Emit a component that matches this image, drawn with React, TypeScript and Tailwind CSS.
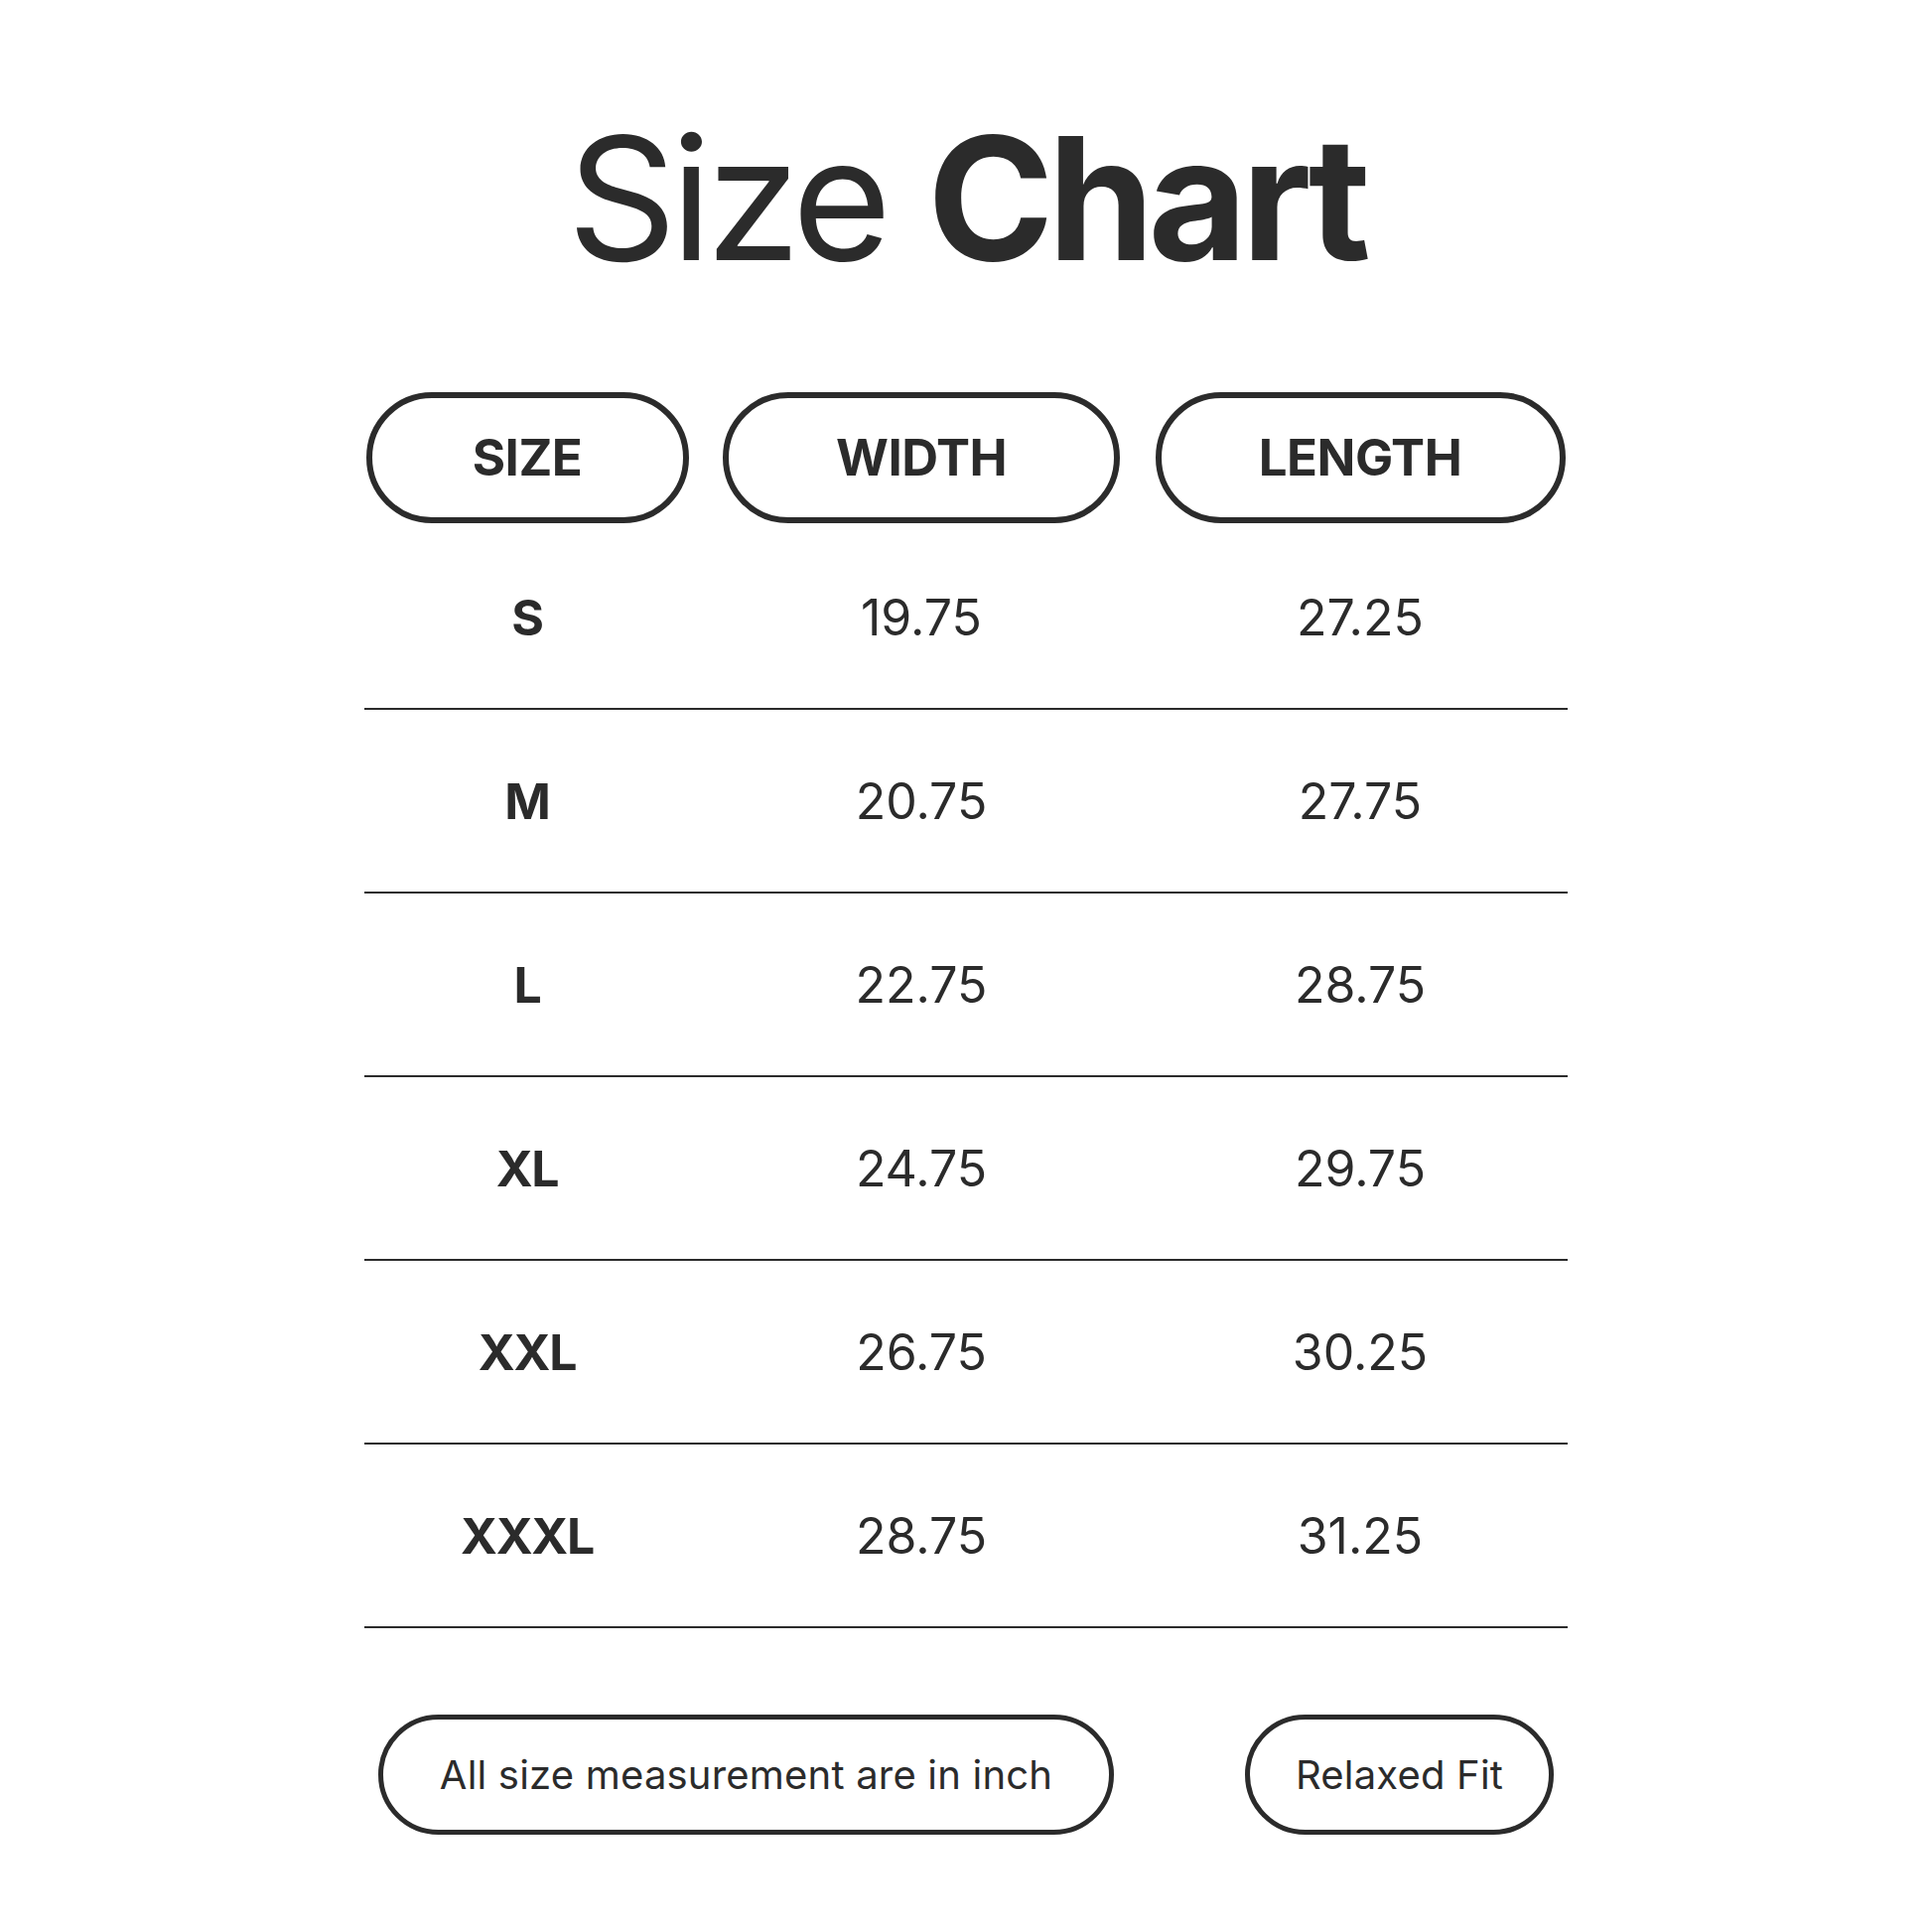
const rows = [
  { size: "S", width: "19.75", length: "27.25" },
  { size: "M", width: "20.75", length: "27.75" },
  { size: "L", width: "22.75", length: "28.75" },
  { size: "XL", width: "24.75", length: "29.75" },
  { size: "XXL", width: "26.75", length: "30.25" },
  { size: "XXXL", width: "28.75", length: "31.25" },
];

export default function App() {
  return (
    <div className="min-h-[1946px] w-full bg-white flex flex-col items-center text-[#2b2b2b] font-['Inter','Liberation_Sans',sans-serif]">
      <h1 className="pt-[113px] text-[172px] leading-none tracking-[-0.035em]">
        <span className="font-normal">Size </span>
        <span className="font-bold">Chart</span>
      </h1>

      <div className="mt-[110px] w-[1212px]">
        {/* header pills */}
        <div className="grid grid-cols-[328px_466px_418px] mb-[3px]">
          <div className="flex justify-center">
            <div className="flex h-[132px] w-[325px] items-center justify-center rounded-full border-[6px] border-[#2b2b2b] text-[51px] font-bold tracking-[-0.01em]">
              SIZE
            </div>
          </div>
          <div className="flex justify-center">
            <div className="flex h-[132px] w-[400px] items-center justify-center rounded-full border-[6px] border-[#2b2b2b] text-[51px] font-bold tracking-[-0.01em]">
              WIDTH
            </div>
          </div>
          <div className="flex justify-center">
            <div className="flex h-[132px] w-[413px] items-center justify-center rounded-full border-[6px] border-[#2b2b2b] text-[51px] font-bold tracking-[-0.01em]">
              LENGTH
            </div>
          </div>
        </div>

        {rows.map((r) => (
          <div
            key={r.size}
            className="grid h-[185px] grid-cols-[328px_466px_418px] items-center border-b-2 border-[#2b2b2b] text-[50px] leading-none"
          >
            <div className="text-center font-bold tracking-tight">{r.size}</div>
            <div className="text-center font-normal">{r.width}</div>
            <div className="text-center font-normal">{r.length}</div>
          </div>
        ))}

        {/* footer notes */}
        <div className="mt-[87px] flex justify-between px-[14px]">
          <div className="flex h-[121px] w-[741px] items-center justify-center rounded-full border-[5px] border-[#2b2b2b] text-[40px] tracking-[0.005em]">
            All size measurement are in inch
          </div>
          <div className="flex h-[121px] w-[311px] items-center justify-center rounded-full border-[5px] border-[#2b2b2b] text-[40px] tracking-[0.005em]">
            Relaxed Fit
          </div>
        </div>
      </div>
    </div>
  );
}
